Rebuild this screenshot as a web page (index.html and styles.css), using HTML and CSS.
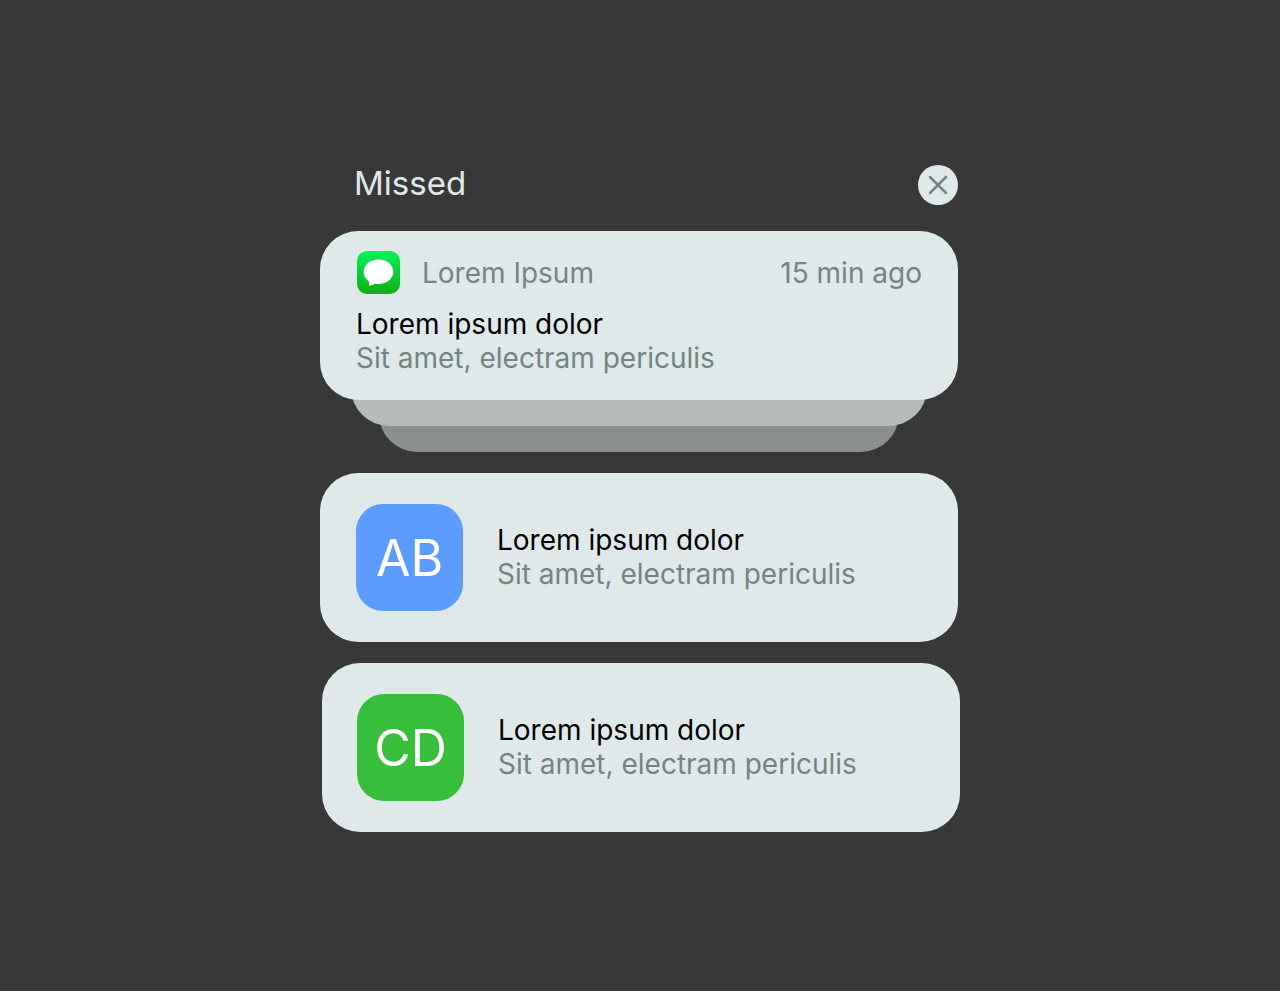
FILE: index.html
```html
<!DOCTYPE html>
<html lang="en">
    <head>
        <meta charset="UTF-8" />
        <meta name="viewport" content="width=device-width, initial-scale=1.0" />
        <title>Missed</title>
        <link rel="stylesheet" href="styles.css" />
    </head>
    <body>
        <main class="container">
            <header class="header">
                <h1>Missed</h1>
                <button type="button" class="close" aria-label="Close">
                    <svg width="20" height="20" viewBox="0 0 20 20">
                        <path d="M2 2L18 18M18 2L2 18" />
                    </svg>
                </button>
            </header>

            <div class="stack">
                <article class="card message">
                    <div class="app">
                        <svg class="app-icon" viewBox="0 0 43 43">
                            <defs>
                                <linearGradient id="green" x1="0" y1="0" x2="0" y2="1">
                                    <stop offset="0" stop-color="#00f557" />
                                    <stop offset="1" stop-color="#0fae14" />
                                </linearGradient>
                            </defs>
                            <rect width="43" height="43" rx="10" fill="url(#green)" />
                            <path
                                fill="#fff"
                                d="M21.5 8.5C13 8.5 6.7 13.7 6.7 20.8C6.7 24.9 8.6 28.2 11.7 30.3C12.2 31.8 12.1 33.2 12 34.8C14.4 34.4 16.500 33.700 18.300 32.800C28.300 34 36.300 28.700 36.300 20.800C36.300 13.700 30 8.500 21.500 8.500Z"
                            />
                        </svg>
                        <span class="app-name">Lorem Ipsum</span>
                        <time>15 min ago</time>
                    </div>
                    <h2>Lorem ipsum dolor</h2>
                    <p>Sit amet, electram periculis</p>
                </article>
                <div class="layer layer-1"></div>
                <div class="layer layer-2"></div>
            </div>

            <article class="card contact">
                <div class="avatar blue">AB</div>
                <div class="text">
                    <h2>Lorem ipsum dolor</h2>
                    <p>Sit amet, electram periculis</p>
                </div>
            </article>

            <article class="card contact last">
                <div class="avatar green">CD</div>
                <div class="text">
                    <h2>Lorem ipsum dolor</h2>
                    <p>Sit amet, electram periculis</p>
                </div>
            </article>
        </main>
    </body>
</html>
```

FILE: styles.css
```css
* {
    box-sizing: border-box;
}

body {
    margin: 0;
    padding: 165px 24px 120px;
    background-color: #383838;
    color: #738582;
    font-family: Inter, 'Liberation Sans', sans-serif;
    font-size: 28px;
    line-height: 34px;
}

h1,
h2,
p {
    margin: 0;
    font-size: inherit;
    font-weight: 400;
}

h2 {
    color: #000;
}

.container {
    display: flex;
    flex-direction: column;
    gap: 21px;
    max-width: 640px;
    margin: 0 auto;
}

.header {
    display: flex;
    justify-content: space-between;
    align-items: center;
    margin: 0 2px 5px 0;
    padding-left: 34px;
}

.header h1 {
    padding-bottom: 4px;
    color: #e0e9ea;
    font-size: 33px;
}

.close {
    display: flex;
    justify-content: center;
    align-items: center;
    width: 40px;
    height: 40px;
    padding: 0;
    border: none;
    border-radius: 50%;
    background-color: #e0e9ea;
    cursor: pointer;
}

.close svg {
    fill: none;
    stroke: #738582;
    stroke-width: 2.5;
    stroke-linecap: round;
}

.card {
    margin-right: 2px;
    border-radius: 38px;
    background-color: #e0e9ea;
}

.stack {
    display: grid;
}

.message {
    z-index: 2;
    padding: 20px 36px 25px;
}

.app {
    display: flex;
    align-items: center;
    gap: 22px;
    margin-bottom: 13px;
    padding-left: 1px;
}

.app-icon {
    flex: none;
    width: 43px;
    height: 43px;
}

.app-name {
    flex: 1;
}

/* cards peeking out under the first one */
.layer {
    height: 76px;
    border-radius: 38px;
}

.layer-1 {
    z-index: 1;
    margin: -50px 33px 0 31px;
    background-color: #b6bcbc;
}

.layer-2 {
    margin: -50px 61px 0 59px;
    background-color: #8c9090;
}

.contact {
    display: flex;
    align-items: center;
    gap: 34px;
    padding: 31px 36px;
}

.text {
    padding-bottom: 2px;
}

.last {
    margin: 0 0 0 2px;
    padding-left: 35px;
}

.avatar {
    display: flex;
    flex: none;
    justify-content: center;
    align-items: center;
    width: 107px;
    height: 107px;
    border-radius: 27px;
    color: #fff;
    font-size: 50px;
}

.blue {
    background-color: #5c9cff;
}

.green {
    background-color: #37bf3b;
}
```
